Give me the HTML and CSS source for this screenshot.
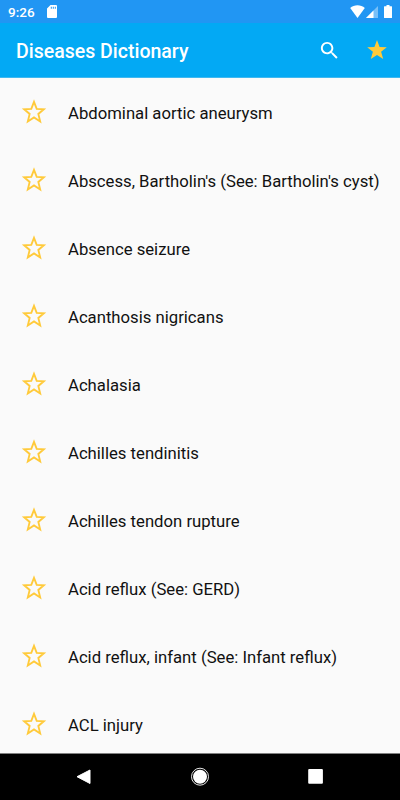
FILE: index.html
```html
<!DOCTYPE html>
<html lang="en">
<head>
  <meta charset="UTF-8">
  <meta name="viewport" content="width=device-width, initial-scale=1.0">
  <title>Diseases Dictionary</title>
  <link rel="stylesheet" href="styles.css">
</head>
<body>
<svg width="0" height="0" class="defs">
  <symbol id="star-outline" viewBox="0 0 24 24">
    <path d="M12 2.600L14.500 9.100L21.100 9.500L16 13.800L17.700 20.700L12 17L6.300 20.700L8 13.800L2.900 9.500L9.500 9.100z" fill="none" stroke="#ffca3a" stroke-width="1.700"/>
  </symbol>
</svg>

<div class="status-bar">
  <span class="time">9:26</span>
  <svg class="sd-card" viewBox="0 0 10 13"><path d="M3.500 0H9a1 1 0 0 1 1 1v11a1 1 0 0 1-1 1H1a1 1 0 0 1-1-1V3.500zM3.800 1.800v2h1v-2zM5.800 1.800v2h1v-2zM7.800 1.800v2h1v-2z" fill-rule="evenodd"/></svg>
  <div class="status-icons">
    <svg class="wifi" viewBox="0 0 16 13"><path d="M7.500 13L.2 3.100C4-.7 11-.7 14.800 3.100z"/></svg>
    <svg class="signal" viewBox="0 0 12 12"><path d="M0 12L12 0v12z" opacity=".4"/><path d="M0 12L7.500 4.500V12z"/></svg>
    <svg class="battery" viewBox="0 0 8 13"><path d="M2.500 0h3v1.300H7.500a.5.5 0 0 1 .5.500v10.700a.5.5 0 0 1-.5.500h-7a.5.5 0 0 1-.5-.5V1.800a.5.5 0 0 1 .5-.5h2z"/></svg>
  </div>
</div>

<header class="app-bar">
  <h1>Diseases Dictionary</h1>
  <svg class="search" viewBox="0 0 24 24"><path d="M15.500 14h-.79l-.28-.27C15.410 12.590 16 11.110 16 9.500 16 5.910 13.090 3 9.500 3S3 5.910 3 9.500 5.910 16 9.500 16c1.610 0 3.090-.59 4.230-1.570l.27.28v.79l5 4.990L20.490 19l-4.990-5zm-6 0C7.010 14 5 11.990 5 9.500S7.010 5 9.500 5 14 7.010 14 9.500 11.990 14 9.500 14z"/></svg>
  <svg class="favorites" viewBox="0 0 24 24"><path d="M12 2L14.600 9L21.800 9.300L16.100 13.800L18.200 21L12 17L5.800 21L7.900 13.800L2.200 9.300L9.400 9z"/></svg>
</header>

<ul class="list">
  <li><svg class="star"><use href="#star-outline"/></svg><span>Abdominal aortic aneurysm</span></li>
  <li><svg class="star"><use href="#star-outline"/></svg><span>Abscess, Bartholin's (See: Bartholin's cyst)</span></li>
  <li><svg class="star"><use href="#star-outline"/></svg><span>Absence seizure</span></li>
  <li><svg class="star"><use href="#star-outline"/></svg><span>Acanthosis nigricans</span></li>
  <li><svg class="star"><use href="#star-outline"/></svg><span>Achalasia</span></li>
  <li><svg class="star"><use href="#star-outline"/></svg><span>Achilles tendinitis</span></li>
  <li><svg class="star"><use href="#star-outline"/></svg><span>Achilles tendon rupture</span></li>
  <li><svg class="star"><use href="#star-outline"/></svg><span>Acid reflux (See: GERD)</span></li>
  <li><svg class="star"><use href="#star-outline"/></svg><span>Acid reflux, infant (See: Infant reflux)</span></li>
  <li><svg class="star"><use href="#star-outline"/></svg><span>ACL injury</span></li>
</ul>

<nav class="nav-bar">
  <svg viewBox="0 0 20 20"><path d="M16 3v13.500L3 9.700z" stroke="#fff" stroke-linejoin="round"/></svg>
  <svg viewBox="0 0 20 20"><circle cx="10" cy="9.700" r="8.500" fill="none" stroke="#fff" stroke-width=".9"/><circle cx="10" cy="9.700" r="7"/></svg>
  <svg viewBox="0 0 20 20"><rect x="2.200" y="2" width="14.700" height="14.800" rx="1"/></svg>
</nav>
</body>
</html>
```

FILE: styles.css
```css
* {
  box-sizing: border-box;
}
body {
  margin: 0;
  height: 800px;
  display: flex;
  flex-direction: column;
  overflow: hidden;
  font-family: Roboto, sans-serif;
  background: #fafafa;
}
svg {
  display: block;
  flex: none;
  fill: #fff;
}
.defs {
  position: absolute;
}
.status-bar {
  flex: none;
  height: 23px;
  display: flex;
  align-items: center;
  padding: 0 8px 0 8px;
  background: #2196f3;
  color: #fff;
}
.time {
  font-size: 13.5px;
  font-weight: 500;
}
.sd-card {
  width: 10px;
  height: 13px;
  margin-left: 12px;
}
.status-icons {
  display: flex;
  align-items: center;
  margin-left: auto;
}
.wifi {
  width: 16px;
  height: 13px;
}
.signal {
  width: 12px;
  height: 12px;
}
.battery {
  width: 8px;
  height: 13px;
  margin-left: 6px;
}
.app-bar {
  flex: none;
  height: 55px;
  display: flex;
  align-items: center;
  padding: 0 11px 0 16px;
  background: #03a9f4;
  border-bottom: 1px solid #40b8f0;
  color: #fff;
}
h1 {
  flex: 1;
  margin: 0;
  padding-top: 2px;
  font-size: 19.5px;
  font-weight: 500;
}
.search {
  width: 23px;
  height: 23px;
}
.favorites {
  width: 24px;
  height: 24px;
  margin-left: 24px;
  fill: #ffca3a;
}
.list {
  flex: 1;
  min-height: 0;
  margin: 0;
  padding: 0;
  list-style: none;
  overflow: hidden;
}
.list li {
  height: 68px;
  display: flex;
  align-items: center;
  padding-left: 21px;
  font-size: 16.7px;
  font-weight: 400;
  color: #111;
}
.list span {
  padding-top: 2px;
}
.star {
  width: 26px;
  height: 26px;
  margin-right: 21px;
}
.nav-bar {
  flex: none;
  height: 47px;
  display: flex;
  align-items: center;
  justify-content: center;
  gap: 96px;
  background: #000;
  border-top: 1px solid #808080;
}
.nav-bar svg {
  width: 20px;
  height: 20px;
}
```
